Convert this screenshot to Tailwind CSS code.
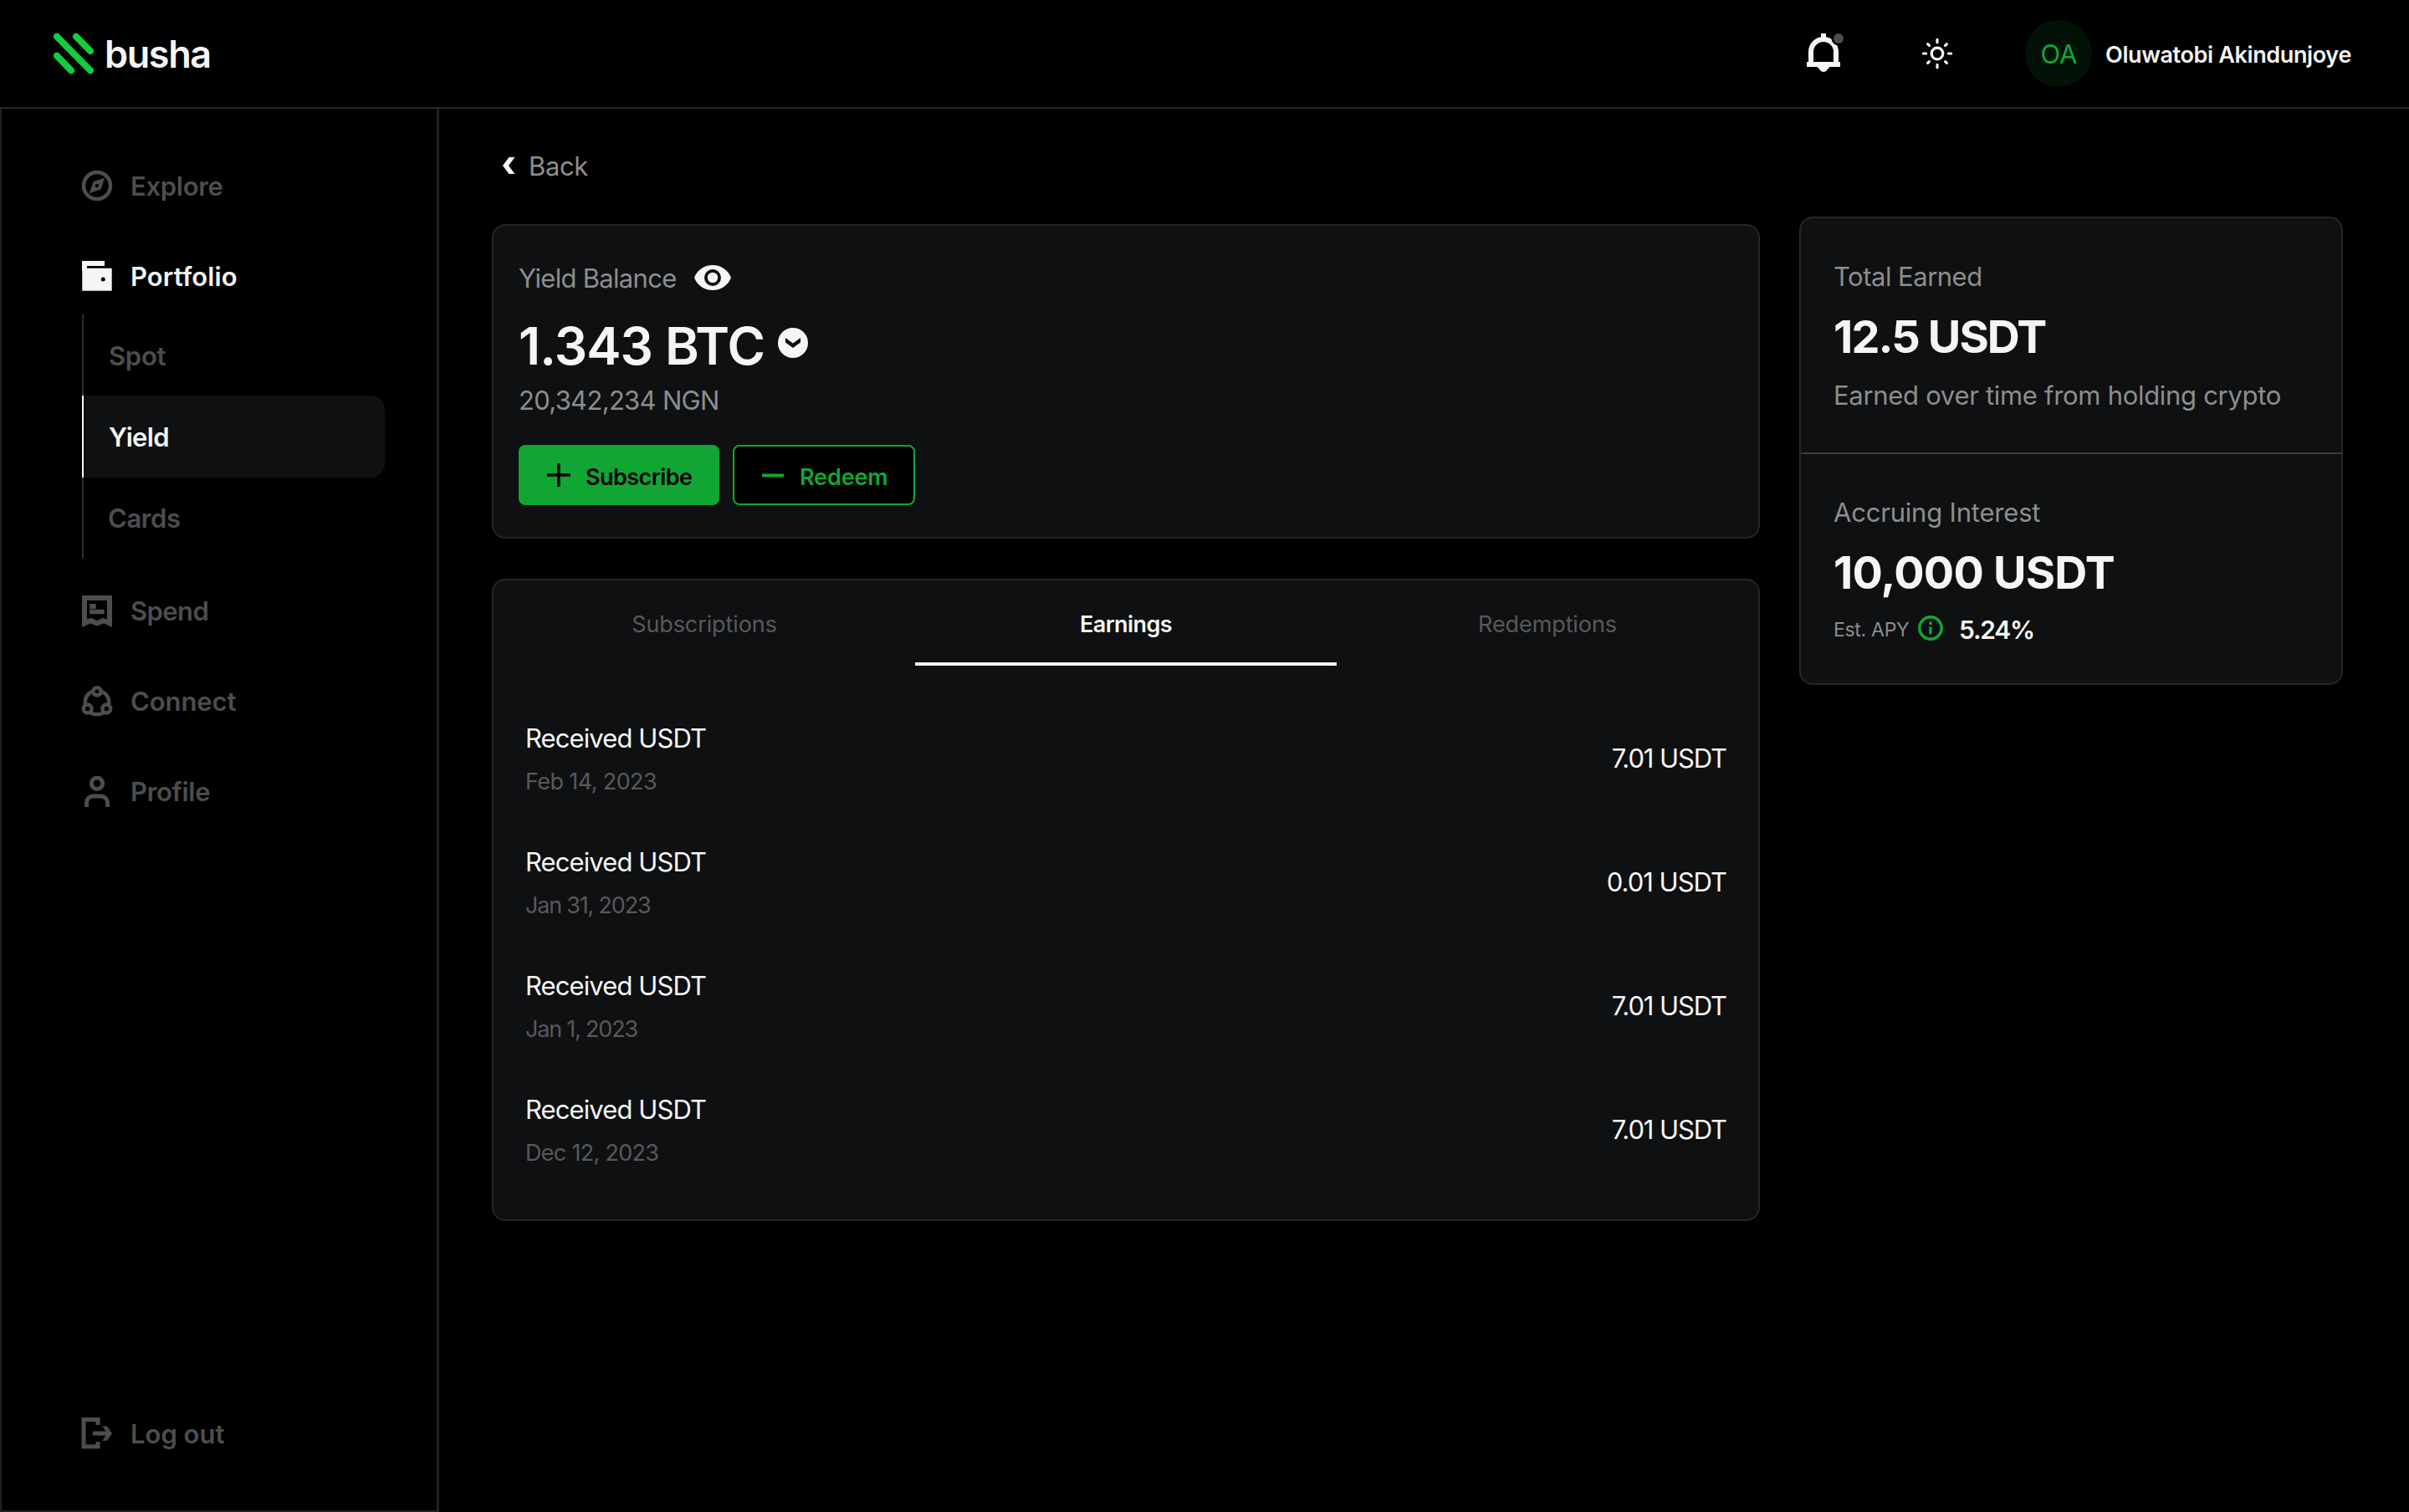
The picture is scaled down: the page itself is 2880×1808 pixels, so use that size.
<!DOCTYPE html>
<html lang="en">
<head>
  <meta charset="UTF-8">
  <meta name="viewport" content="width=device-width, initial-scale=1.0">
  <title>Busha - Yield</title>
  <script src="https://cdn.jsdelivr.net/npm/@tailwindcss/browser@4"></script>
</head>
<body class="bg-black text-[#f5f5f5] font-['Inter',sans-serif]">
  <div class="w-[2880px] h-[1808px] flex flex-col overflow-hidden whitespace-nowrap leading-none">
    <!-- Header -->
    <header class="h-[130px] shrink-0 border-b-2 border-[#242628] flex items-center justify-between pl-[64px] pr-[69px]">
      <div class="flex items-center">
        <svg class="w-[48px] h-[50px]" viewBox="0 0 48 50" fill="none" stroke="#14cc3d" stroke-width="8" stroke-linecap="round">
          <path d="M4 4.7L44 45.3M27 4.7L44 22M4 27.700L21 45.3" />
        </svg>
        <span class="ml-[13px] text-[45px] font-semibold tracking-[-1.4px]">busha</span>
      </div>
      <div class="flex items-center">
        <svg class="w-[48px] h-[48px]" viewBox="0 0 48 48">
          <path d="M24 0V7M9 36V22A15 15 0 0 1 39 22V36" fill="none" stroke="#f5f5f5" stroke-width="6" />
          <path d="M4 34H44V40H31.500L27 45Q24 47 21 45L16.500 40H4Z" fill="#f5f5f5" />
          <circle cx="42" cy="6" r="8.500" fill="#000" />
          <circle cx="42" cy="6" r="6" fill="#4d4d4d" />
        </svg>
        <svg class="w-[40px] h-[40px] ml-[92px]" viewBox="0 0 40 40" fill="none" stroke="#f5f5f5" stroke-width="3.2" stroke-linecap="round">
          <circle cx="20" cy="20" r="6.800" />
          <path d="M20 3.300V6.700M20 33.300V36.700M3.300 20H6.700M33.300 20H36.700M8.600 8.600L10.400 10.400M29.600 29.600L31.400 31.400M8.600 31.400L10.400 29.600M29.600 10.400L31.400 8.600" />
        </svg>
        <span class="ml-[85px] size-[80px] rounded-full bg-[#021207] text-[#11a633] text-[31px] flex items-center justify-center pt-px pl-px">OA</span>
        <span class="ml-[16px] w-[294px] text-[27px] font-semibold tracking-[-0.37px] pt-[2px]">Oluwatobi Akindunjoye</span>
      </div>
    </header>

    <div class="flex flex-1">
      <!-- Sidebar -->
      <nav class="w-[525px] shrink-0 border-l-2 border-r-3 border-b-2 border-[#1f2123] pl-[95px] pt-[73px] pb-[73px] flex flex-col text-[31px] font-semibold tracking-[-0.3px] text-[#4d4d4d]">
        <a class="h-[38px] flex items-center gap-[21px]">
          <svg class="size-[38px]" viewBox="0 0 38 38" fill="none">
            <circle cx="19" cy="19" r="16" stroke="currentColor" stroke-width="4.500" />
            <path fill="currentColor" fill-rule="evenodd" d="M28 9.700L23.700 23.300L9.700 28.300L14.700 14.300ZM19 16.700A2.300 2.300 0 1 0 19 21.300A2.300 2.300 0 1 0 19 16.700Z" />
          </svg>
          <span class="pt-px">Explore</span>
        </a>
        <a class="h-[38px] mt-[70px] flex items-center gap-[21px] text-[#f5f5f5]">
          <svg class="size-[38px]" viewBox="0 0 38 38" fill="currentColor">
            <path fill-rule="evenodd" d="M1 1H28V7H7V9.700H36.700V36.700H1.300V13H1ZM26.300 20.500A2.500 2.500 0 1 0 26.300 25.500A2.500 2.500 0 1 0 26.300 20.500Z" />
          </svg>
          <span class="pt-px tracking-[0.1px]">Portfolio</span>
        </a>
        <div class="mt-[27px] ml-px w-[362px] h-[292px] flex flex-col">
          <a class="flex-1 border-l-2 border-[#2b2c2e] pl-[30px] flex items-center pt-px">Spot</a>
          <a class="flex-1 border-l-2 border-white rounded-r-[16px] bg-[#0f1012] text-[#f5f5f5] pl-[30px] flex items-center pt-px tracking-[-0.7px]">Yield</a>
          <a class="flex-1 border-l-2 border-[#2b2c2e] pl-[29px] flex items-center pt-px tracking-[-0.4px]">Cards</a>
        </div>
        <a class="h-[38px] mt-[44px] flex items-center gap-[21px]">
          <svg class="size-[38px]" viewBox="0 0 38 38" fill="currentColor">
            <path fill-rule="evenodd" d="M1 0H37V38L27 33.500L19 36.500L11 33.500L1 38ZM7 6V28.700L12 26.700L19 30.300L26 26.700L31 28.700V6Z" />
            <path d="M10.300 10H17.700V16H10.300ZM10.300 16.700H27.700V22.300H10.300Z" />
          </svg>
          <span class="pb-px tracking-[-0.6px]">Spend</span>
        </a>
        <a class="h-[38px] mt-[70px] flex items-center gap-[21px]">
          <svg class="size-[38px]" viewBox="0 0 38 38" fill="none" stroke="currentColor" stroke-width="4.500">
            <circle cx="19" cy="20" r="14.300" />
            <g fill="#000">
              <circle cx="19" cy="6.900" r="4.700" />
              <circle cx="7.700" cy="27.500" r="4.900" />
              <circle cx="30.300" cy="27.500" r="4.900" />
            </g>
          </svg>
          <span class="pb-px tracking-[-0.1px]">Connect</span>
        </a>
        <a class="h-[38px] mt-[70px] flex items-center gap-[21px]">
          <svg class="size-[38px]" viewBox="0 0 38 38" fill="none" stroke="currentColor" stroke-width="5">
            <circle cx="19" cy="8.800" r="6.700" />
            <path d="M6.500 37V32A8 8 0 0 1 14.500 24H23.500A8 8 0 0 1 31.500 32V37" />
          </svg>
          <span class="pb-px">Profile</span>
        </a>
        <a class="h-[38px] mt-auto flex items-center gap-[21px]">
          <svg class="size-[38px]" viewBox="0 0 38 38" fill="currentColor">
            <path d="M.500 0H22.500V8.700H17.500V5H5.500V32.300H17.500V29H22.500V37.300H.500Z" />
            <path d="M25.500 10.500H31L37 19L31 27.700H25.500L29.500 21.500H14V16.500H29.500Z" />
          </svg>
          <span class="pt-px tracking-normal">Log out</span>
        </a>
      </nav>

      <main class="flex flex-1 pl-[63px] gap-[47px]">
        <div class="w-[1516px] shrink-0 flex flex-col">
          <a class="mt-[52px] h-[32px] pl-[13px] flex items-center gap-[16px] text-[31px] tracking-[-0.4px] text-[#8c8e8f]">
            <svg class="w-[15px] h-[20px]" viewBox="0 0 15 20" fill="#f5f5f5"><path d="M7.500 0H14.500L7 10L14.500 20H7.500L0 10Z" /></svg>
            <span>Back</span>
          </a>

          <!-- Yield balance -->
          <section class="mt-[54px] h-[376px] border-2 border-[#242628] rounded-[16px] bg-[#0f1012] px-[30px] pt-[46px]">
            <div class="h-[32px] flex items-center text-[31px] tracking-[-0.7px] text-[#8c8e8f]">
              <span class="w-[210px]">Yield Balance</span>
              <svg class="w-[44px] h-[30px]" viewBox="0 0 44 30" fill="#f5f5f5">
                <path fill-rule="evenodd" d="M22 0C12 0 3.500 6 0 15C3.500 24 12 30 22 30S40.500 24 44 15C40.500 6 32 0 22 0ZM22 5A10 10 0 1 0 22 25A10 10 0 1 0 22 5Z" />
                <circle cx="22" cy="15" r="6.200" />
              </svg>
            </div>
            <div class="mt-[33px] h-[64px] flex items-center">
              <span class="w-[310px] text-[62px] font-semibold tracking-[-0.9px] pt-[2px]">1.343 BTC</span>
              <svg class="size-[36px] mb-[6px]" viewBox="0 0 36 36">
                <circle cx="18" cy="18" r="18" fill="#f5f5f5" />
                <path d="M9 12L18 18.500L27 12V17.500L18 24L9 17.500Z" fill="#0f1012" />
              </svg>
            </div>
            <p class="mt-[18px] h-[32px] text-[31px] tracking-[-0.7px] text-[#8c8e8f]">20,342,234 NGN</p>
            <div class="mt-[37px] flex gap-[16px] text-[27px] font-semibold">
              <button class="w-[240px] h-[72px] rounded-[8px] bg-[#11a633] text-black pl-[34px] flex items-center gap-[18px] tracking-[-0.55px]">
                <svg class="size-[28px]" viewBox="0 0 28 28" fill="none" stroke="currentColor" stroke-width="3.500"><path d="M14 0V28M0 14H28" /></svg>
                <span class="pt-[4px]">Subscribe</span>
              </button>
              <button class="w-[218px] h-[72px] rounded-[8px] border-2 border-[#11a633] bg-black text-[#11a633] pl-[32px] flex items-center gap-[18px] tracking-[-0.15px]">
                <svg class="size-[28px]" viewBox="0 0 28 28" fill="none" stroke="currentColor" stroke-width="4"><path d="M1 14.500H27" /></svg>
                <span class="pt-[4px]">Redeem</span>
              </button>
            </div>
          </section>

          <!-- History -->
          <section class="mt-[48px] h-[768px] border-2 border-[#242628] rounded-[16px] bg-[#0f1012]">
            <div class="grid grid-cols-3 h-[102px] text-[27px] tracking-[-0.1px] text-[#58595b] text-center">
              <div class="pt-[39px]">Subscriptions</div>
              <div class="pt-[39px] border-b-4 border-[#f5f5f5] font-semibold tracking-[-0.6px] text-[#f5f5f5]">Earnings</div>
              <div class="pt-[39px]">Redemptions</div>
            </div>
            <div class="mt-[38px] px-[38px]">
              <div class="h-[148px] flex items-center justify-between text-[31px]">
                <div class="pb-px">
                  <p class="tracking-[-0.9px]">Received USDT</p>
                  <p class="mt-[23px] text-[27px] tracking-[-0.6px] text-[#58595b]">Feb 14, 2023</p>
                </div>
                <span class="pb-[3px] tracking-[-1.1px]">7.01 USDT</span>
              </div>
              <div class="h-[148px] flex items-center justify-between text-[31px]">
                <div class="pb-px">
                  <p class="tracking-[-0.9px]">Received USDT</p>
                  <p class="mt-[23px] text-[27px] tracking-[-1.2px] text-[#58595b]">Jan 31, 2023</p>
                </div>
                <span class="pb-[3px] tracking-[-1px]">0.01 USDT</span>
              </div>
              <div class="h-[148px] flex items-center justify-between text-[31px]">
                <div class="pb-px">
                  <p class="tracking-[-0.9px]">Received USDT</p>
                  <p class="mt-[23px] text-[27px] tracking-[-1.2px] text-[#58595b]">Jan 1, 2023</p>
                </div>
                <span class="pb-[3px] tracking-[-1.1px]">7.01 USDT</span>
              </div>
              <div class="h-[148px] flex items-center justify-between text-[31px]">
                <div class="pb-px">
                  <p class="tracking-[-0.9px]">Received USDT</p>
                  <p class="mt-[23px] text-[27px] tracking-[-0.7px] text-[#58595b]">Dec 12, 2023</p>
                </div>
                <span class="pb-[3px] tracking-[-1.1px]">7.01 USDT</span>
              </div>
            </div>
          </section>
        </div>

        <!-- Totals -->
        <aside class="mt-[129px] w-[650px] h-[560px] border-2 border-[#242628] rounded-[16px] bg-[#0f1012] text-[31px] tracking-[-0.3px] text-[#8c8e8f]">
          <div class="h-[282px] border-b-2 border-[#3c3d3f] px-[39px] pt-[54px]">
            <p class="h-[32px] tracking-[-0.5px]">Total Earned</p>
            <p class="mt-[28px] h-[56px] text-[54px] leading-[56px] font-bold tracking-[-1.9px] text-[#f5f5f5]">12.5 USDT</p>
            <p class="mt-[26px] h-[32px]">Earned over time from holding crypto</p>
          </div>
          <div class="px-[39px] pt-[54px]">
            <p class="h-[32px] tracking-[-0.2px]">Accruing Interest</p>
            <p class="mt-[28px] h-[56px] text-[54px] leading-[56px] font-bold tracking-[-0.8px] text-[#f5f5f5]">10,000 USDT</p>
            <div class="mt-[24px] h-[32px] flex items-center">
              <span class="w-[101px] text-[23px]">Est. APY</span>
              <svg class="size-[30px] mb-[4px]" viewBox="0 0 30 30" fill="none" stroke="#11a633" stroke-width="3.500">
                <circle cx="15" cy="15" r="13.200" />
                <path d="M15 13.500V22M15 7.500V11" />
              </svg>
              <span class="ml-[19px] text-[30px] font-semibold tracking-[-1.2px] text-[#f5f5f5]">5.24%</span>
            </div>
          </div>
        </aside>
      </main>
    </div>
  </div>
</body>
</html>
